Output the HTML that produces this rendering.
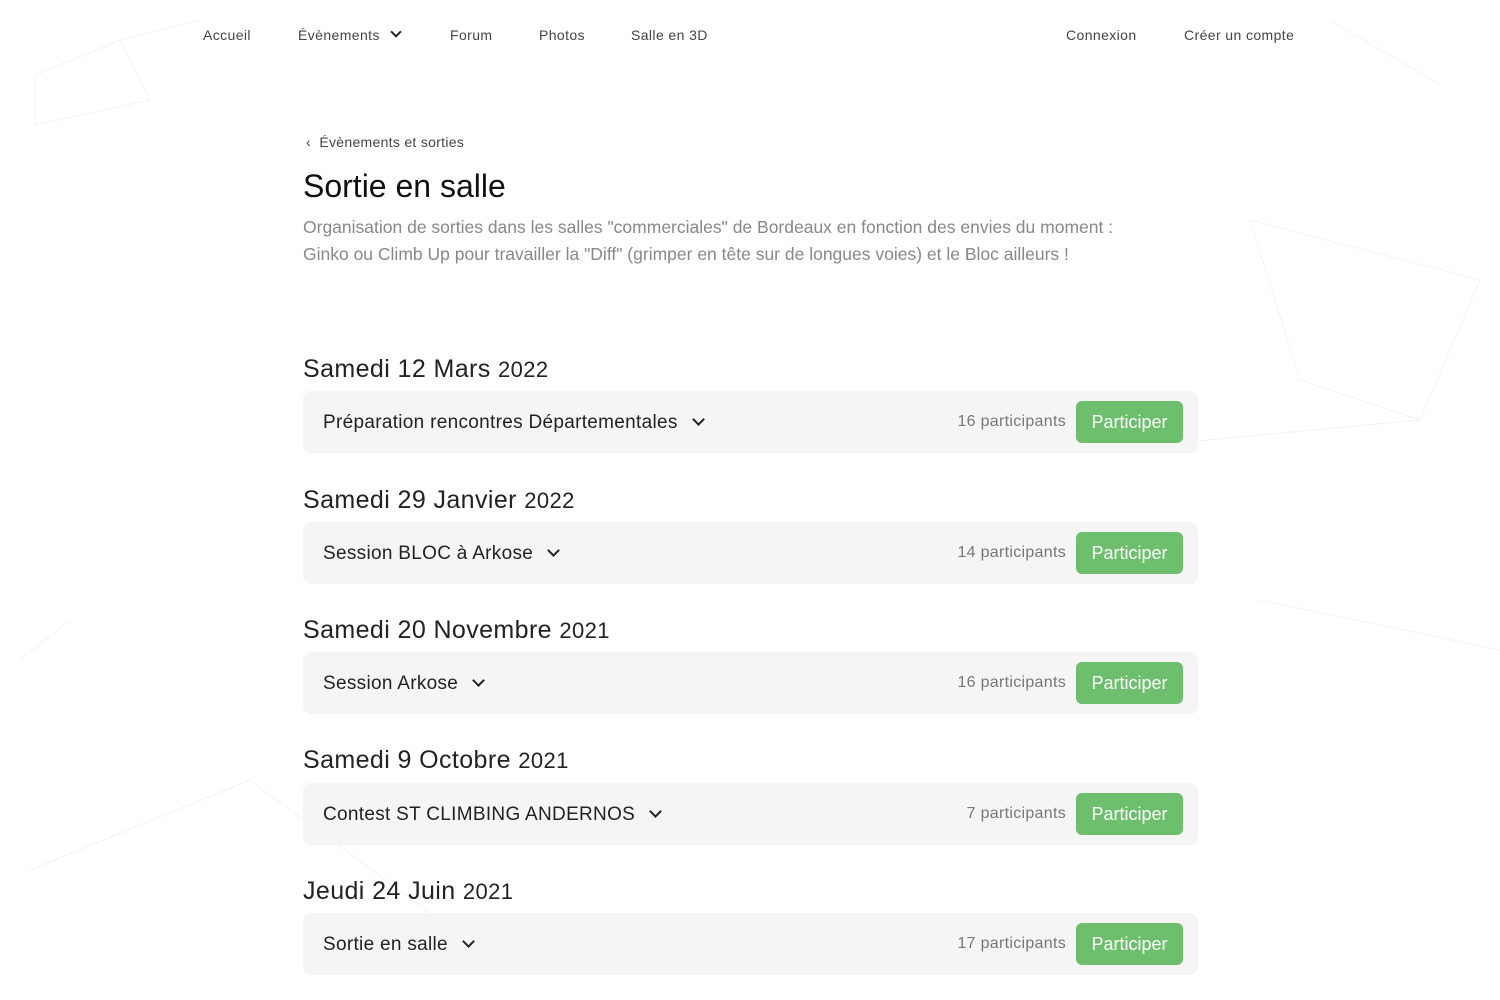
<!DOCTYPE html>
<html><head><meta charset="utf-8"><style>
*{margin:0;padding:0;box-sizing:border-box}
body{width:1500px;height:1000px;overflow:hidden;background:#fff;font-family:"Liberation Sans",sans-serif;position:relative;color:#222}
.nav{position:absolute;top:27px;font-size:14px;color:#444;letter-spacing:.4px}
.chev{display:inline-block;width:8px;height:8px;border-right:2px solid #222;border-bottom:2px solid #222;transform:rotate(45deg);margin-left:12px;position:relative;top:-4px}
.t .chev{width:9px;height:9px;margin-left:16px}
.h{position:absolute;left:303px;font-size:25px;font-weight:300;color:#222;letter-spacing:.4px}
.h span{font-size:22px}
.card{position:absolute;left:303px;width:895px;height:62px;background:#f5f5f5;border-radius:8px}
.t{position:absolute;left:20px;top:21px;font-size:19px;color:#222;letter-spacing:.3px}
.p{position:absolute;right:132px;top:22px;font-size:16px;color:#777;letter-spacing:.3px}
.b{position:absolute;right:15px;top:10px;width:107px;height:42px;background:#6dbf6d;border-radius:6px;color:#fff;font-size:18px;text-align:center;line-height:42px}
</style></head><body>
<svg style="position:absolute;left:0;top:0" width="1500" height="1000"><g stroke="#f3f3f3" fill="none" stroke-width="1">
<path d="M35 75L120 40L150 100L35 125Z M120 40L200 20 M1330 20L1440 85 M1250 220L1480 280L1420 420L1300 380Z M1100 450L1420 420 M30 870L250 780L440 920 M20 660L70 620 M1260 600L1500 650"/></g></svg>
<div class="nav" style="left:203px">Accueil</div>
<div class="nav" style="left:298px">Évènements<span class="chev"></span></div>
<div class="nav" style="left:450px">Forum</div>
<div class="nav" style="left:539px">Photos</div>
<div class="nav" style="left:631px">Salle en 3D</div>
<div class="nav" style="left:1066px">Connexion</div>
<div class="nav" style="left:1184px">Créer un compte</div>
<div style="position:absolute;left:306px;top:134px;font-size:14px;color:#444;letter-spacing:.3px">‹&nbsp; Évènements et sorties</div>
<div style="position:absolute;left:303px;top:168px;font-size:32px;color:#111">Sortie en salle</div>
<div style="position:absolute;left:303px;top:214px;width:850px;font-size:17.5px;line-height:27px;color:#888">Organisation de sorties dans les salles "commerciales" de Bordeaux en fonction des envies du moment : Ginko ou Climb Up pour travailler la "Diff" (grimper en tête sur de longues voies) et le Bloc ailleurs !</div>

<div class="h" style="top:355px">Samedi 12 Mars <span>2022</span></div>
<div class="card" style="top:391px"><div class="t">Préparation rencontres Départementales<span class="chev"></span></div><div class="p">16 participants</div><div class="b">Participer</div></div>
<div class="h" style="top:486px">Samedi 29 Janvier <span>2022</span></div>
<div class="card" style="top:522px"><div class="t">Session BLOC à Arkose<span class="chev"></span></div><div class="p">14 participants</div><div class="b">Participer</div></div>
<div class="h" style="top:616px">Samedi 20 Novembre <span>2021</span></div>
<div class="card" style="top:652px"><div class="t">Session Arkose<span class="chev"></span></div><div class="p">16 participants</div><div class="b">Participer</div></div>
<div class="h" style="top:746px">Samedi 9 Octobre <span>2021</span></div>
<div class="card" style="top:783px"><div class="t">Contest ST CLIMBING ANDERNOS<span class="chev"></span></div><div class="p">7 participants</div><div class="b">Participer</div></div>
<div class="h" style="top:877px">Jeudi 24 Juin <span>2021</span></div>
<div class="card" style="top:913px"><div class="t">Sortie en salle<span class="chev"></span></div><div class="p">17 participants</div><div class="b">Participer</div></div>
</body></html>
